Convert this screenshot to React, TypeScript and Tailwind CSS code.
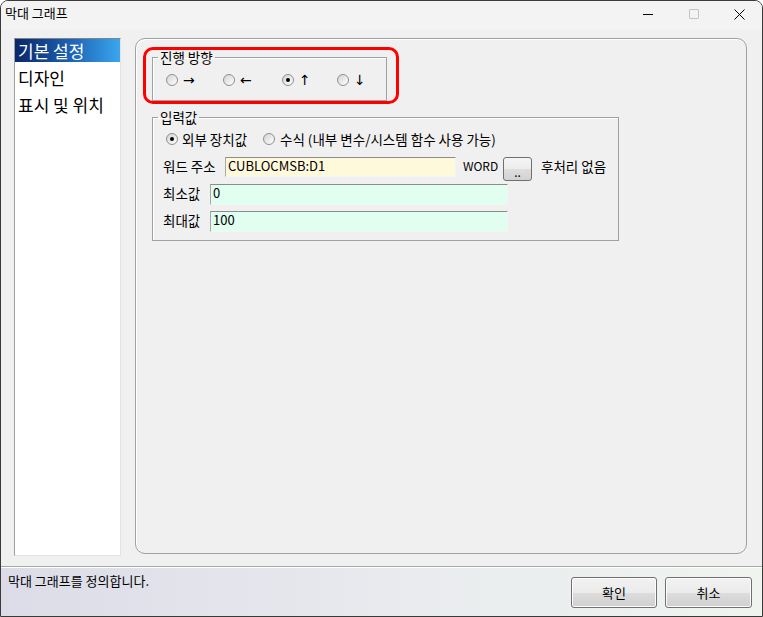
import React from 'react';

function Radio({ checked }: { checked?: boolean }) {
  return (
    <span className="w-[12px] h-[12px] shrink-0 rounded-full border border-[#8e8f8f] bg-gradient-to-br from-[#d4d4d4] to-[#ffffff] flex items-center justify-center">
      {checked && <span className="w-[4px] h-[4px] rounded-full bg-black" />}
    </span>
  );
}

function Field({ value, width, bg }: { value: string; width: string; bg: string }) {
  return (
    <div
      className={`${width} ${bg} h-full border-t border-l border-t-[#8c8c8c] border-l-[#a8a8a8] border-b border-r border-b-[#f4f4f4] border-r-[#f4f4f4] pl-[2px] text-[13px] leading-[16px]`}
    >
      {value}
    </div>
  );
}

function DialogButton({ label }: { label: string }) {
  return (
    <button className="w-full h-[31px] rounded-[3px] border border-[#707070] bg-[linear-gradient(#f2f2f2_0%,#ebebeb_50%,#dddddd_51%,#cfcfcf_100%)] text-[13px] leading-[16px] flex items-center justify-center shadow-[inset_0_0_0_1px_#fcfcfc]">
      {label}
    </button>
  );
}

export default function App() {
  const directions = [
    { arrow: '→', w: 'w-[57px]', checked: false },
    { arrow: '←', w: 'w-[59px]', checked: false },
    { arrow: '↑', w: 'w-[55px]', checked: true },
    { arrow: '↓', w: 'w-[40px]', checked: false },
  ];

  return (
    <div className="w-[763px] h-[617px] flex flex-col bg-[#f0f0f0] border border-[#3a3a3a] rounded-t-[8px] overflow-hidden text-black font-['Noto_Sans_CJK_KR','Noto_Sans',sans-serif]">
      {/* title bar */}
      <div className="h-[29px] shrink-0 flex items-center bg-[#f3f3f3]">
        <span className="pl-[4px] text-[13px] leading-[16px] -mt-[5px]">막대 그래프</span>
        <div className="ml-auto flex h-full -mt-[3px]">
          <div className="w-[46px] h-full flex items-center justify-center">
            <span className="w-[10px] h-[1px] bg-black" />
          </div>
          <div className="w-[46px] h-full flex items-center justify-center">
            <span className="w-[10px] h-[10px] border border-[#c4c4c4] rounded-[1px]" />
          </div>
          <div className="w-[45px] h-full flex items-center justify-center">
            <svg width="11" height="11" viewBox="0 0 11 11">
              <path d="M0.5 0.5 L10.5 10.5 M10.5 0.5 L0.5 10.5" stroke="#000" strokeWidth="1" />
            </svg>
          </div>
        </div>
      </div>

      {/* main */}
      <div className="h-[536px] shrink-0 flex pt-[8px] pl-[13px]">
        {/* left list */}
        <div className="w-[107px] h-[518px] bg-white border-t border-l border-t-[#828282] border-l-[#a0a0a0] border-b border-r border-b-[#e3e3e3] border-r-[#e3e3e3] text-[17px] leading-[20px]">
          <div className="h-[23px] flex items-center pl-[3px] text-white bg-gradient-to-r from-[#0a2668] via-[#1c5fb0] to-[#3aa6ee]">
            기본 설정
          </div>
          <div className="h-[27px] mt-[2px] flex items-center pl-[3px]">디자인</div>
          <div className="h-[27px] flex items-center pl-[3px]">표시 및 위치</div>
        </div>

        {/* right panel */}
        <div className="ml-[14px] w-[612px] h-[516px] rounded-[10px] border border-[#a0a0a0] shadow-[inset_1px_1px_0_#ffffff] pt-[8px] pl-[7px] flex flex-col">
          {/* direction group with red highlight */}
          <div className="w-[256px] h-[57px] border-[3px] border-[#ff0000] rounded-[10px] pl-[6px]">
            <fieldset className="w-[235px] h-[51px] border border-[#a0a0a0] shadow-[inset_1px_1px_0_#ffffff]">
              <legend className="ml-[5px] px-[2px] text-[13.5px] leading-[14px]">진행 방향</legend>
              <div className="h-[16px] mt-[8px] pl-[13px] flex items-center">
                {directions.map((d) => (
                  <div key={d.arrow} className={`${d.w} flex items-center`}>
                    <Radio checked={d.checked} />
                    <span className="ml-[5px] leading-[16px] font-['DejaVu_Sans',sans-serif] text-[14px]">{d.arrow}</span>
                  </div>
                ))}
              </div>
            </fieldset>
          </div>

          {/* input value group */}
          <fieldset className="ml-[9px] mt-[6px] w-[467px] h-[131px] border border-[#a0a0a0] shadow-[inset_1px_1px_0_#ffffff] text-[13.5px] leading-[16px]">
            <legend className="ml-[5px] px-[2px] leading-[14px]">입력값</legend>

            <div className="h-[16px] mt-[7px] pl-[13px] flex items-center">
              <div className="w-[97px] flex items-center">
                <Radio checked />
                <span className="ml-[4px]">외부 장치값</span>
              </div>
              <div className="flex items-center">
                <Radio />
                <span className="ml-[5px]">수식 (내부 변수/시스템 함수 사용 가능)</span>
              </div>
            </div>

            <div className="h-[24px] mt-[10px] pl-[10px] flex items-start">
              <span className="w-[62px] mt-[1px]">워드 주소</span>
              <div className="h-[20px]">
                <Field value="CUBLOCMSB:D1" width="w-[231px]" bg="bg-[#fff9dc]" />
              </div>
              <span className="ml-[7px] w-[40px] mt-[1px] text-[12px]">WORD</span>
              <button className="w-[29px] h-[24px] rounded-[3px] border border-[#707070] bg-[linear-gradient(#f4f4f4_0%,#ececec_50%,#dedede_51%,#d2d2d2_100%)] flex items-end justify-center pb-[3px] text-[12px] leading-[10px]">
                ..
              </button>
              <span className="ml-[9px] mt-[1px]">후처리 없음</span>
            </div>

            <div className="h-[21px] mt-[3px] pl-[10px] flex items-start">
              <span className="w-[47px] mt-[1px]">최소값</span>
              <Field value="0" width="w-[298px]" bg="bg-[#e0fff0]" />
            </div>

            <div className="h-[21px] mt-[6px] pl-[10px] flex items-start">
              <span className="w-[47px] mt-[1px]">최대값</span>
              <Field value="100" width="w-[298px]" bg="bg-[#e0fff0]" />
            </div>
          </fieldset>
        </div>
      </div>

      {/* status bar */}
      <div className="flex-1 flex border-t border-[#a6a6a6] shadow-[inset_0_1px_0_#ffffff] bg-gradient-to-r from-[#dcdce8] via-[#e8eaee] to-[#f0f4ef] pl-[7px] pr-[10px]">
        <span className="mt-[6px] text-[13px] leading-[16px]">막대 그래프를 정의합니다.</span>
        <div className="ml-auto mt-[10px] flex gap-[8px]">
          <div className="w-[86px]">
            <DialogButton label="확인" />
          </div>
          <div className="w-[87px]">
            <DialogButton label="취소" />
          </div>
        </div>
      </div>
    </div>
  );
}
